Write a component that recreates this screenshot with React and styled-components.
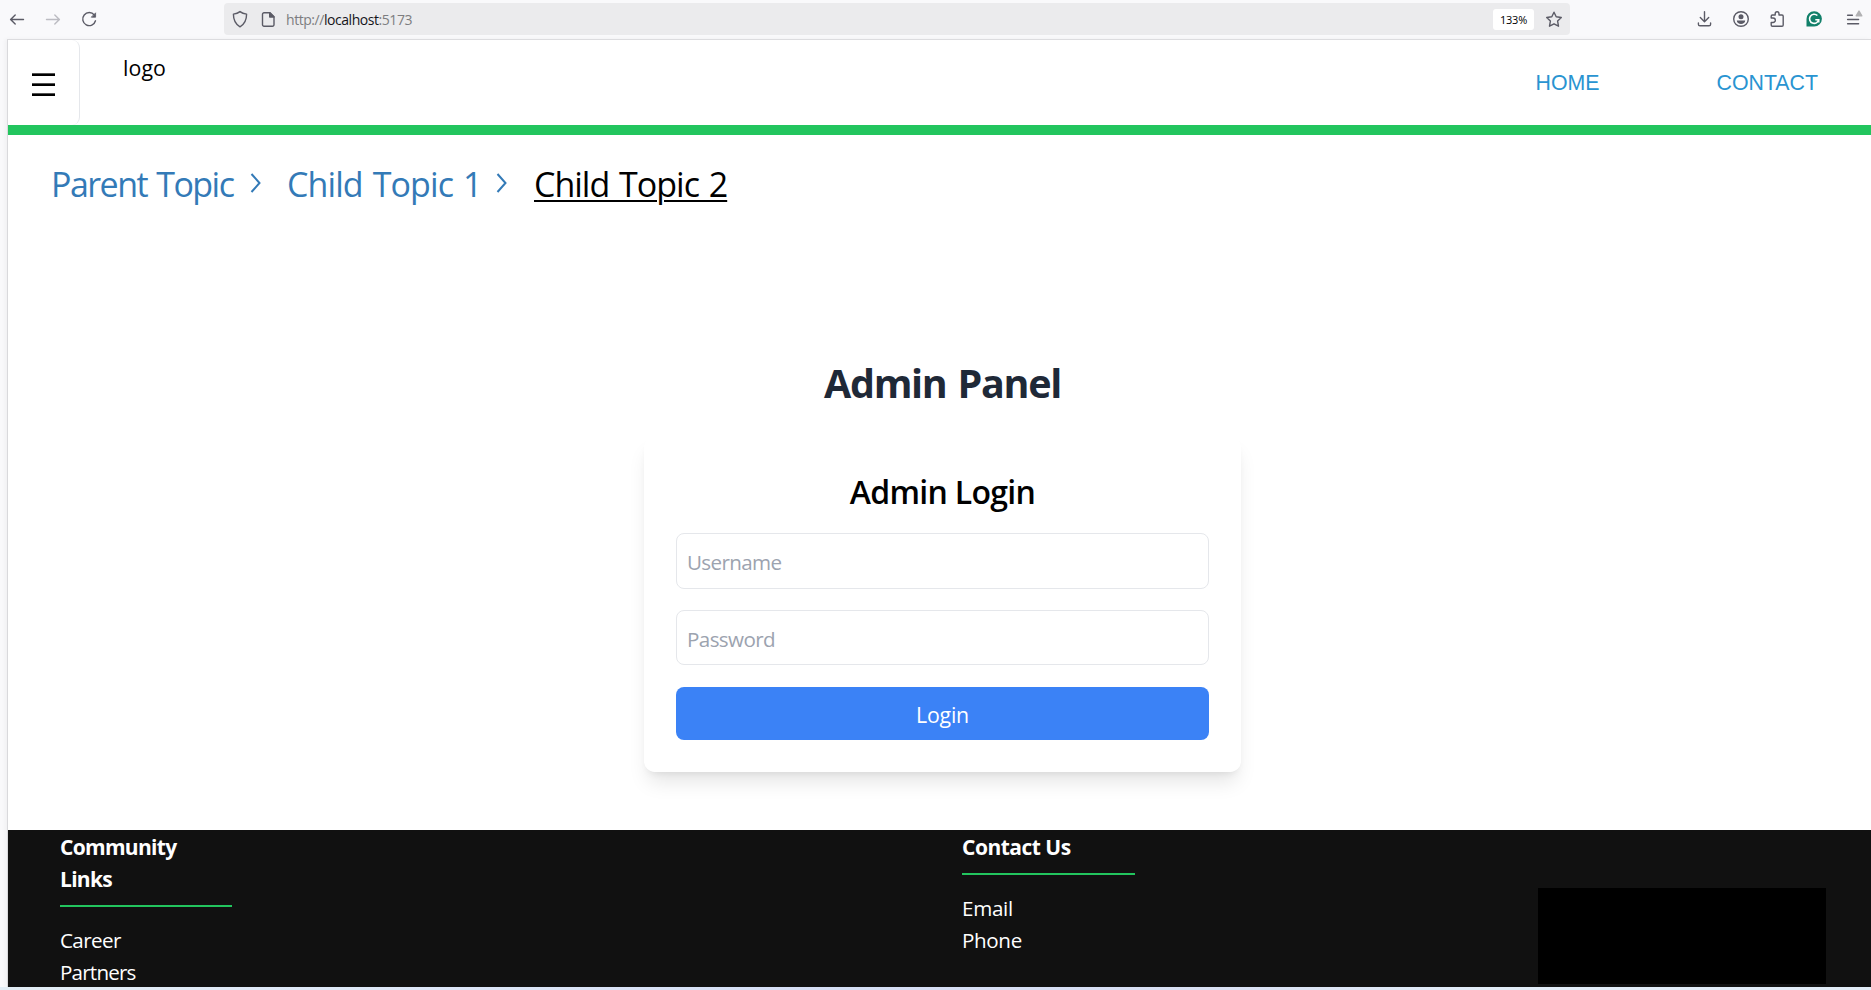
import React from "react";
import styled, { createGlobalStyle } from "styled-components";

const GlobalStyle = createGlobalStyle`
  *, *::before, *::after { box-sizing: border-box; }
  html, body { margin: 0; padding: 0; background: #f9f9fb; }
  body { font-family: "Segoe UI", "Open Sans", "Noto Sans", sans-serif; font-size: 21.33px; line-height: 32px; color: #000; overflow: hidden; }
  a { color: inherit; text-decoration: none; }
  h1, h2, h3, ul { margin: 0; padding: 0; list-style: none; }
`;

const Window = styled.div`
  width: 1871px;
  height: 990px;
  display: flex;
  flex-direction: column;
`;

const Toolbar = styled.div`
  height: 39px;
  flex: none;
  display: flex;
  align-items: center;
  padding-bottom: 1px;
  background: #f9f9fb;
`;

const NavButtons = styled.div`
  display: flex;
  gap: 18px;
  width: 224px;
  padding-left: 8px;
`;

const AddressBar = styled.div`
  width: 1346px;
  height: 32px;
  display: flex;
  align-items: center;
  padding: 0 7px 0 8px;
  border-radius: 4px;
  background: #ebebed;
`;

const Url = styled.span`
  flex: 1;
  margin-left: 8px;
  font-size: 14px;
  line-height: 20px;
  letter-spacing: -0.45px;
  color: #7d7d80;
  padding-top: 2px;
  b { font-weight: 400; color: #15141a; }
`;

const ZoomBadge = styled.span`
  width: 41px;
  height: 21px;
  margin-right: 11px;
  border-radius: 3px;
  background: #fff;
  font-size: 11px;
  line-height: 22px;
  letter-spacing: -0.2px;
  text-align: center;
`;

const Actions = styled.div`
  display: flex;
  gap: 18.4px;
  margin-left: 125.5px;
`;

const Icon = styled.svg`
  display: block;
  flex: none;
  width: 18px;
  height: 18px;
  margin-left: ${(p) => p.$ml || 0}px;
  overflow: visible;
  fill: none;
  stroke: ${(p) => p.$c || "#5b5b66"};
  stroke-width: 1.4;
  stroke-linecap: round;
  stroke-linejoin: round;
`;

const Page = styled.div`
  height: 948px;
  flex: none;
  margin-left: 7px;
  display: flex;
  flex-direction: column;
  background: #fff;
  border-left: 1px solid #d9d9dc;
  border-top: 1px solid #dcdcdf;
  box-shadow: -2px 0 4px rgba(0, 0, 0, 0.04);
`;

const Header = styled.header`
  height: 95px;
  flex: none;
  display: flex;
  border-bottom: 10px solid #22c55e;
`;

const MenuButton = styled.button`
  width: 72px;
  height: 85px;
  padding: 4px 0 0 24px;
  display: flex;
  flex-direction: column;
  justify-content: center;
  gap: 7px;
  border: 0;
  border-right: 1px solid #e5e7eb;
  border-radius: 0 8px 8px 0;
  background: #fff;
`;

const MenuBar = styled.span`
  width: 23px;
  height: 3px;
  background: linear-gradient(#555 1px, #000 1px);
`;

const Logo = styled.div`
  flex: 1;
  padding: 12px 0 0 43px;
  letter-spacing: 0.1px;
`;

const HeaderNav = styled.nav`
  display: flex;
  gap: 117px;
  padding: 27px 53px 0 0;
  font-family: "Liberation Sans", Arial, sans-serif;
  font-size: 21.33px;
  color: #2994d1;
`;

const Breadcrumbs = styled.nav`
  height: 100px;
  flex: none;
  display: flex;
  padding: 25px 0 0 43px;
  font-size: 34px;
  line-height: 48px;
  color: #337ab7;
`;

const Crumb = styled.a`
  width: ${(p) => p.$w}px;
  white-space: nowrap;
  letter-spacing: ${(p) => p.$ls}px;
  word-spacing: 2px;
`;

const Current = styled.span`
  height: 42px;
  color: #000;
  text-decoration: underline;
  text-decoration-thickness: 2px;
  text-underline-offset: 3px;
  white-space: nowrap;
  letter-spacing: ${(p) => p.$ls}px;
  word-spacing: 2px;
`;

const Chevron = styled.svg`
  width: 11px;
  height: 20px;
  margin: 13px ${(p) => p.$mr}px 0 0;
  fill: none;
  stroke: #337ab7;
  stroke-width: 2;
`;

const Main = styled.main`
  flex: 1;
  display: flex;
  flex-direction: column;
  align-items: center;
  padding: 121px 0 0 6px;
`;

const PanelTitle = styled.h1`
  font-size: 39.5px;
  line-height: 54px;
  font-weight: 700;
  color: #1f2937;
  letter-spacing: -1.3px;
  word-spacing: 2px;
`;

const Card = styled.form`
  width: 597px;
  height: 335px;
  margin-top: 27px;
  padding: 32px;
  display: flex;
  flex-direction: column;
  background: #fff;
  border-radius: 10.7px;
  box-shadow: 0 13.3px 20px -4px rgba(0, 0, 0, 0.1), 0 5.3px 8px -5.3px rgba(0, 0, 0, 0.1);
`;

const CardTitle = styled.h2`
  height: 64px;
  padding-top: 1px;
  font-size: 32px;
  line-height: 44px;
  font-weight: 600;
  text-align: center;
  letter-spacing: -0.7px;
`;

const Field = styled.input`
  width: 100%;
  height: ${(p) => p.$h}px;
  flex: none;
  margin-bottom: ${(p) => 77 - p.$h}px;
  padding: 2px 10px 0;
  border: 1px solid #e5e7eb;
  border-radius: 8px;
  outline: 0;
  background: #fff;
  font: inherit;
  font-size: 20.6px;
  letter-spacing: ${(p) => p.$ls}px;
  &::placeholder { color: #9ca3af; opacity: 1; }
`;

const LoginButton = styled.button`
  height: 53px;
  padding: 2px 0 0;
  border: 0;
  border-radius: 8px;
  background: #3b82f6;
  color: #fff;
  font: inherit;
  letter-spacing: -0.25px;
`;

const Footer = styled.footer`
  height: 157px;
  flex: none;
  display: flex;
  background: #111;
  color: #fff;
  padding: 1px 45px 0 52px;
`;

const FooterColumn = styled.section`
  width: ${(p) => p.$w}px;
`;

const FooterTitle = styled.h3`
  width: ${(p) => p.$w}px;
  padding-bottom: 10px;
  margin-bottom: 17px;
  border-bottom: 2px solid #22c55e;
  font-size: 21px;
  font-weight: 700;
  letter-spacing: ${(p) => p.$ls}px;
`;

const FooterLink = styled.li`
  font-size: 20.6px;
  letter-spacing: ${(p) => p.$ls}px;
`;

const FooterBox = styled.div`
  width: 288px;
  height: 96px;
  margin: 57px 0 0 auto;
  background: #000;
`;

const Taskbar = styled.div`
  height: 3px;
  flex: none;
  background: linear-gradient(90deg, #e2edf5, #dfe9f8 18%, #d5def5 45%, #d9e0f3 65%, #e2edf8 80%);
`;

export default function App() {
  return (
    <>
      <GlobalStyle />
      <Window>
        <Toolbar>
          <NavButtons>
            <Icon viewBox="0 0 18 18"><path d="M2.700 9.500H15.500M7.200 4.900L2.600 9.500l4.600 4.600" /></Icon>
            <Icon viewBox="0 0 18 18" $c="#bcbcc2"><path d="M2.500 9.500H15.300M10.800 4.900l4.600 4.600-4.600 4.600" /></Icon>
            <Icon viewBox="0 0 18 18"><path d="M14.300 5A6.500 6.500 0 1 0 15.500 10.800" /><path d="M15.600 3.200v4h-4z" fill="#5b5b66" strokeWidth="0.8" /></Icon>
          </NavButtons>
          <AddressBar>
            <Icon viewBox="0 0 18 18"><path d="M8 1.600c2 1.700 4.100 2.300 6.600 2.500 0 6-1.200 9.800-6.600 12.700C2.600 13.900 1.400 10.100 1.400 4.100c2.500-.2 4.600-.8 6.600-2.500z" /></Icon>
            <Icon viewBox="0 0 18 18" $ml={10}><path d="M4 2.700h6l4 4v8a1.500 1.500 0 0 1-1.500 1.500H4A1.500 1.500 0 0 1 2.500 14.700V4.200A1.500 1.500 0 0 1 4 2.700z" /><path d="M9.700 2.700v4.300h4.300z" fill="#5b5b66" /></Icon>
            <Url>http://<b>localhost</b>:5173</Url>
            <ZoomBadge>133%</ZoomBadge>
            <Icon viewBox="0 0 18 18"><path d="M9 2.200l2.200 4.600 5.100.7-3.700 3.600.9 5.100L9 13.800l-4.500 2.400.9-5.100L1.700 7.500l5.100-.7z" /></Icon>
          </AddressBar>
          <Actions>
            <Icon viewBox="0 0 18 18"><path d="M8.500 1.800v9.700M4.300 7.500l4.200 4.200 4.200-4.200M2.400 12.900v1.300a1.600 1.600 0 0 0 1.600 1.600h9a1.600 1.600 0 0 0 1.600-1.600v-1.300" /></Icon>
            <Icon viewBox="0 0 18 18"><circle cx="9" cy="9" r="7.300" /><circle cx="9" cy="6.800" r="2.500" fill="#5b5b66" stroke="none" /><path d="M4.800 10.500h8.400c0 2.200-1.900 3.500-4.200 3.500s-4.200-1.300-4.200-3.500z" fill="#5b5b66" stroke="none" /></Icon>
            <Icon viewBox="0 0 18 18"><path d="M3.200 8V6.200A1.200 1.200 0 0 1 4.400 5h2.800V3.700a1.900 1.900 0 0 1 3.800 0V5h3a1.200 1.200 0 0 1 1.200 1.200v8.900a1.200 1.200 0 0 1-1.200 1.200H4.400a1.200 1.200 0 0 1-1.200-1.200v-2.600h1.900a2 2 0 0 0 0-4.500z" /></Icon>
            <Icon viewBox="0 0 18 18" $ml={0.5}><path d="M1.500 16.600V9A7.700 7.700 0 1 1 9.200 16.600z" fill="#12806a" stroke="none" /><path d="M12.400 5.500a4.600 4.600 0 1 0 1.300 4.200h-3.400M13.700 9.200v3.200" stroke="#fff" strokeWidth="1.600" strokeLinecap="butt" strokeLinejoin="miter" /></Icon>
            <Icon viewBox="0 0 18 18" $ml={2}><path d="M3.600 5.300h4.800M3.600 9.500h11M3.600 13.700h11" /><path d="M15 1.100l2.800 4.700h-5.600z" fill="#b1b1b3" stroke="#b1b1b3" /></Icon>
          </Actions>
        </Toolbar>
        <Page>
          <Header>
            <MenuButton aria-label="Menu"><MenuBar /><MenuBar /><MenuBar /></MenuButton>
            <Logo>logo</Logo>
            <HeaderNav><a href="#home">HOME</a><a href="#contact">CONTACT</a></HeaderNav>
          </Header>
          <Breadcrumbs>
            <Crumb href="#parent" $w={199} $ls={-1.55}>Parent Topic</Crumb>
            <Chevron viewBox="0 0 11 20" $mr={26}><path d="M1.500 1l8 9-8 9" /></Chevron>
            <Crumb href="#child" $w={209} $ls={-0.9}>Child Topic 1</Crumb>
            <Chevron viewBox="0 0 11 20" $mr={27}><path d="M1.500 1l8 9-8 9" /></Chevron>
            <Current $ls={-1}>Child Topic 2</Current>
          </Breadcrumbs>
          <Main>
            <PanelTitle>Admin Panel</PanelTitle>
            <Card>
              <CardTitle>Admin Login</CardTitle>
              <Field placeholder="Username" $h={56} $ls={-0.65} />
              <Field placeholder="Password" type="password" $h={55} $ls={-0.6} />
              <LoginButton type="button">Login</LoginButton>
            </Card>
          </Main>
          <Footer>
            <FooterColumn $w={902}>
              <FooterTitle $w={172} $ls={-0.7}>Community<br />Links</FooterTitle>
              <ul>
                <FooterLink $ls={-0.6}>Career</FooterLink>
                <FooterLink $ls={-0.8}>Partners</FooterLink>
              </ul>
            </FooterColumn>
            <FooterColumn $w={173}>
              <FooterTitle $w={173} $ls={-0.5}>Contact Us</FooterTitle>
              <ul>
                <FooterLink $ls={-0.3}>Email</FooterLink>
                <FooterLink $ls={-0.35}>Phone</FooterLink>
              </ul>
            </FooterColumn>
            <FooterBox />
          </Footer>
        </Page>
        <Taskbar />
      </Window>
    </>
  );
}
